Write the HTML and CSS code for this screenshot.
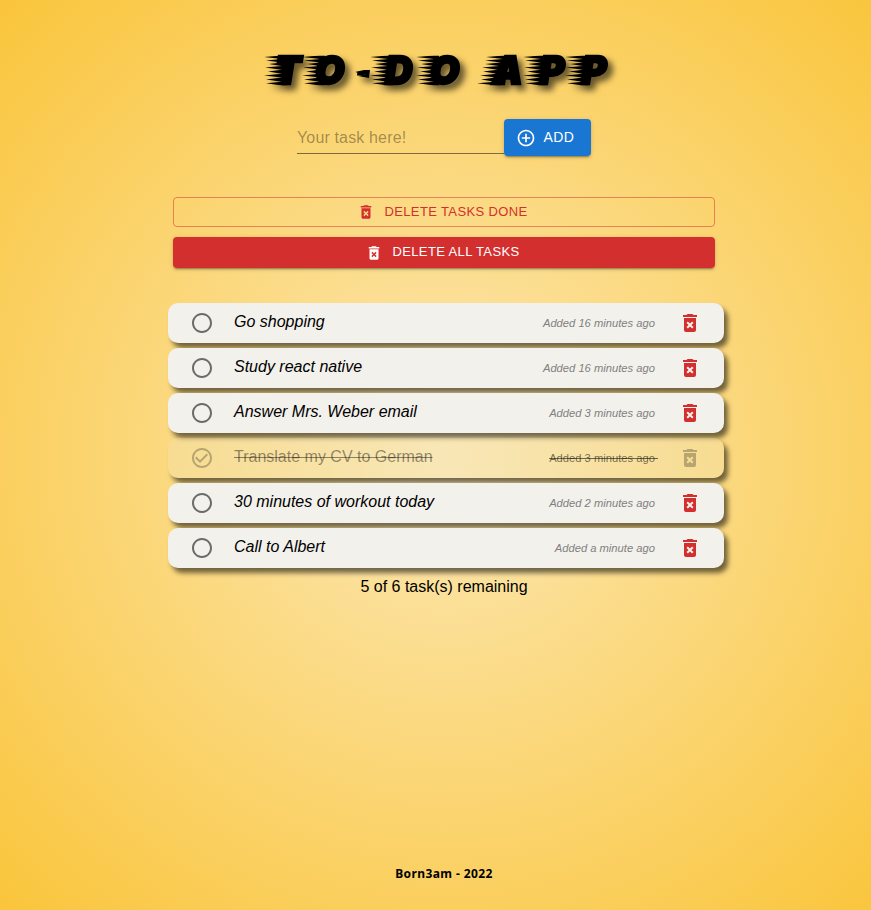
FILE: index.html
```
<!DOCTYPE html>
<html lang="en">
<head>
<meta charset="utf-8">
<title>To-do app</title>
<link rel="stylesheet" href="styles.css">
</head>
<body>
<svg class="defs" width="0" height="0" aria-hidden="true">
  <symbol id="trash" viewBox="0 0 24 24"><path fill-rule="evenodd" d="M6 19c0 1.100.9 2 2 2h8c1.100 0 2-.9 2-2V7H6v12zm2.460-7.120 1.410-1.410L12 12.590l2.120-2.120 1.410 1.410L13.410 14l2.120 2.120-1.410 1.410L12 15.410l-2.120 2.120-1.410-1.410L10.590 14l-2.130-2.120zM15.500 4l-1-1h-5l-1 1H5v2h14V4z"/></symbol>
  <symbol id="circle" viewBox="0 0 24 24"><path d="M12 2C6.480 2 2 6.480 2 12s4.480 10 10 10 10-4.480 10-10S17.520 2 12 2zm0 18c-4.420 0-8-3.580-8-8s3.580-8 8-8 8 3.580 8 8-3.580 8-8 8z"/></symbol>
  <symbol id="check" viewBox="0 0 24 24"><path d="M16.590 7.580L10 14.170l-3.590-3.580L5 12l5 5 8-8zM12 2C6.480 2 2 6.480 2 12s4.480 10 10 10 10-4.480 10-10S17.520 2 12 2zm0 18c-4.420 0-8-3.580-8-8s3.580-8 8-8 8 3.580 8 8-3.580 8-8 8z"/></symbol>
  <symbol id="plus" viewBox="0 0 24 24"><path d="M13 7h-2v4H7v2h4v4h2v-4h4v-2h-4V7zm-1-5C6.480 2 2 6.480 2 12s4.480 10 10 10 10-4.480 10-10S17.520 2 12 2zm0 18c-4.410 0-8-3.590-8-8s3.590-8 8-8 8 3.590 8 8-3.590 8-8 8z"/></symbol>
  <symbol id="streaks" viewBox="0 0 26 30"><path d="M0 1.500 18 0h5v30h-5L2 27.800 18 26.300 2 24 18 22 0 20 18 18.300 4 16 18 14.200 1 12 18 10.500 5 8.500 18 7 2 5 18 3.400z"/></symbol>
  <symbol id="slant" viewBox="0 0 32 30"><path d="M9 1.500 27 0h5L28 30h-8L0 27.800 18 26.300 4 24 19 22 3 20 20 18.300 6 16 21 14.200 5 12 22 10.500 8 8.500 24 7 8 5 26 3.400z"/></symbol>
</svg>
<main class="app">
  <h1 class="title">
    <svg width="350" height="34" viewBox="0 0 350 34">
      <use href="#streaks" x="0" y="1.500" width="26" height="30"/>
      <use href="#streaks" x="38" y="1.500" width="26" height="30"/>
      <use href="#streaks" x="106" y="1.500" width="26" height="30"/>
      <use href="#streaks" x="152" y="1.500" width="26" height="30"/>
      <use href="#slant" x="213" y="1.500" width="32" height="30"/>
      <use href="#streaks" x="259" y="1.500" width="26" height="30"/>
      <use href="#streaks" x="301" y="1.500" width="26" height="30"/>
      <path d="M91 18l9-2h6l-1 8-11-2 7-1.500z"/>
      <text class="letters" x="11 51 92.500 121 166 195 228.500 275.500 317.500" y="30 30 24.500 30 30 30 30 30 30">TO<tspan class="dash">-</tspan>DO APP</text>
    </svg>
  </h1>
  <form class="entry">
    <input class="field" type="text" placeholder="Your task here!">
    <button class="btn add" type="button"><svg><use href="#plus"/></svg><span>ADD</span></button>
  </form>
  <div class="actions">
    <button class="btn wide outlined" type="button"><svg><use href="#trash"/></svg><span>DELETE TASKS DONE</span></button>
    <button class="btn wide solid" type="button"><svg><use href="#trash"/></svg><span>DELETE ALL TASKS</span></button>
  </div>
  <ul class="tasks">
    <li class="task"><svg class="tick"><use href="#circle"/></svg><span class="name">Go shopping</span><span class="time">Added 16 minutes ago </span><svg class="del"><use href="#trash"/></svg></li>
    <li class="task"><svg class="tick"><use href="#circle"/></svg><span class="name">Study react native</span><span class="time">Added 16 minutes ago </span><svg class="del"><use href="#trash"/></svg></li>
    <li class="task"><svg class="tick"><use href="#circle"/></svg><span class="name">Answer Mrs. Weber email</span><span class="time">Added 3 minutes ago </span><svg class="del"><use href="#trash"/></svg></li>
    <li class="task done"><svg class="tick"><use href="#check"/></svg><span class="name">Translate my CV to German</span><span class="time">Added 3 minutes ago </span><svg class="del"><use href="#trash"/></svg></li>
    <li class="task"><svg class="tick"><use href="#circle"/></svg><span class="name">30 minutes of workout today</span><span class="time">Added 2 minutes ago </span><svg class="del"><use href="#trash"/></svg></li>
    <li class="task"><svg class="tick"><use href="#circle"/></svg><span class="name">Call to Albert</span><span class="time">Added a minute ago </span><svg class="del"><use href="#trash"/></svg></li>
  </ul>
  <p class="count">5 of 6 task(s) remaining</p>
  <footer class="footer">Born3am - 2022</footer>
</main>
</body>
</html>
```
FILE: styles.css
```
* { box-sizing: border-box; }
body {
  margin: 0;
  height: 910px;
  overflow: hidden;
  font-family: "Liberation Sans", sans-serif;
  font-size: 16px;
  background: radial-gradient(circle at 51% 50%, #fce8b4 0%, #fac53b 100%);
}
.defs { position: absolute; }
svg { fill: currentColor; flex: none; }
.app {
  height: 100%;
  padding: 54px 0 0 17px;
  display: flex;
  flex-direction: column;
  align-items: center;
}
.title { margin: 0 10px 0 0; height: 34px; }
.title svg {
  display: block;
  overflow: visible;
  filter: drop-shadow(5px 5px 3px rgba(0, 0, 0, .6));
}
.letters {
  font: italic 900 38px Inter, sans-serif;
  stroke: #000;
  stroke-width: 2.300px;
}
.dash { font-size: 18px; stroke-width: 1px; }
.entry { display: flex; margin: 31px 0 0; height: 37px; }
.field {
  width: 207px;
  height: 35px;
  padding: 4px 0 0;
  border: 0;
  border-bottom: 1px solid rgba(0, 0, 0, .5);
  border-radius: 0;
  background: none;
  font: 16px "Liberation Sans", sans-serif;
  letter-spacing: .15px;
}
.field::placeholder { color: rgba(0, 0, 0, .37); opacity: 1; }
.btn {
  display: flex;
  align-items: center;
  justify-content: center;
  border: 0;
  border-radius: 4px;
  padding: 0;
  font-family: "Liberation Sans", sans-serif;
  color: #fff;
}
.btn span { padding-bottom: 2px; }
.add {
  width: 87px;
  padding-right: 5px;
  font-size: 14px;
  letter-spacing: .4px;
  background: #1976d2;
  box-shadow: 0 3px 1px -2px rgba(0,0,0,.2), 0 2px 2px rgba(0,0,0,.14), 0 1px 5px rgba(0,0,0,.12);
}
.add svg { width: 20px; height: 20px; margin: 1px 8px 0 0; }
.actions { width: 542px; margin-top: 41px; display: grid; gap: 10px; }
.wide { height: 30px; padding-right: 3px; font-size: 13px; letter-spacing: .37px; }
.wide svg { width: 18px; height: 18px; margin: 0 9px 0 0; }
.outlined { color: #d32f2f; background: none; border: 1px solid rgba(211,47,47,.5); }
.solid {
  height: 31px;
  background: #d32f2f;
  box-shadow: 0 3px 1px -2px rgba(0,0,0,.2), 0 2px 2px rgba(0,0,0,.14), 0 1px 5px rgba(0,0,0,.12);
}
.tasks {
  list-style: none;
  width: 556px;
  margin: 35px 0 0 4px;
  padding: 0;
  display: grid;
  gap: 5px;
}
.task {
  height: 40px;
  padding: 0 22px;
  display: flex;
  align-items: center;
  border-radius: 10px;
  background: #f3f1ec;
  box-shadow: 4px 5px 5px rgba(0, 0, 0, .55);
}
.tick, .del { width: 24px; height: 24px; }
.tick { color: #6b6b69; }
.del { color: #d32f2f; }
.name { flex: 1; margin-left: 20px; padding-bottom: 3px; font-style: italic; }
.time { font-size: 11.200px; font-style: italic; color: gray; white-space: pre; margin-right: 20px; }
.done { background: rgba(240, 230, 190, .3); }
.done .tick, .done .del { color: rgba(0, 0, 0, .26); }
.done .name { font-style: normal; text-decoration: line-through; color: rgba(0, 0, 0, .43); }
.done .time { font-style: normal; text-decoration: line-through; color: rgba(0, 0, 0, .55); }
.count { margin: 9px 0 0; line-height: 19px; }
.footer {
  margin: auto 0 27px;
  font: bold 12px/18px "Noto Sans", sans-serif;
  letter-spacing: .4px;
}
```
